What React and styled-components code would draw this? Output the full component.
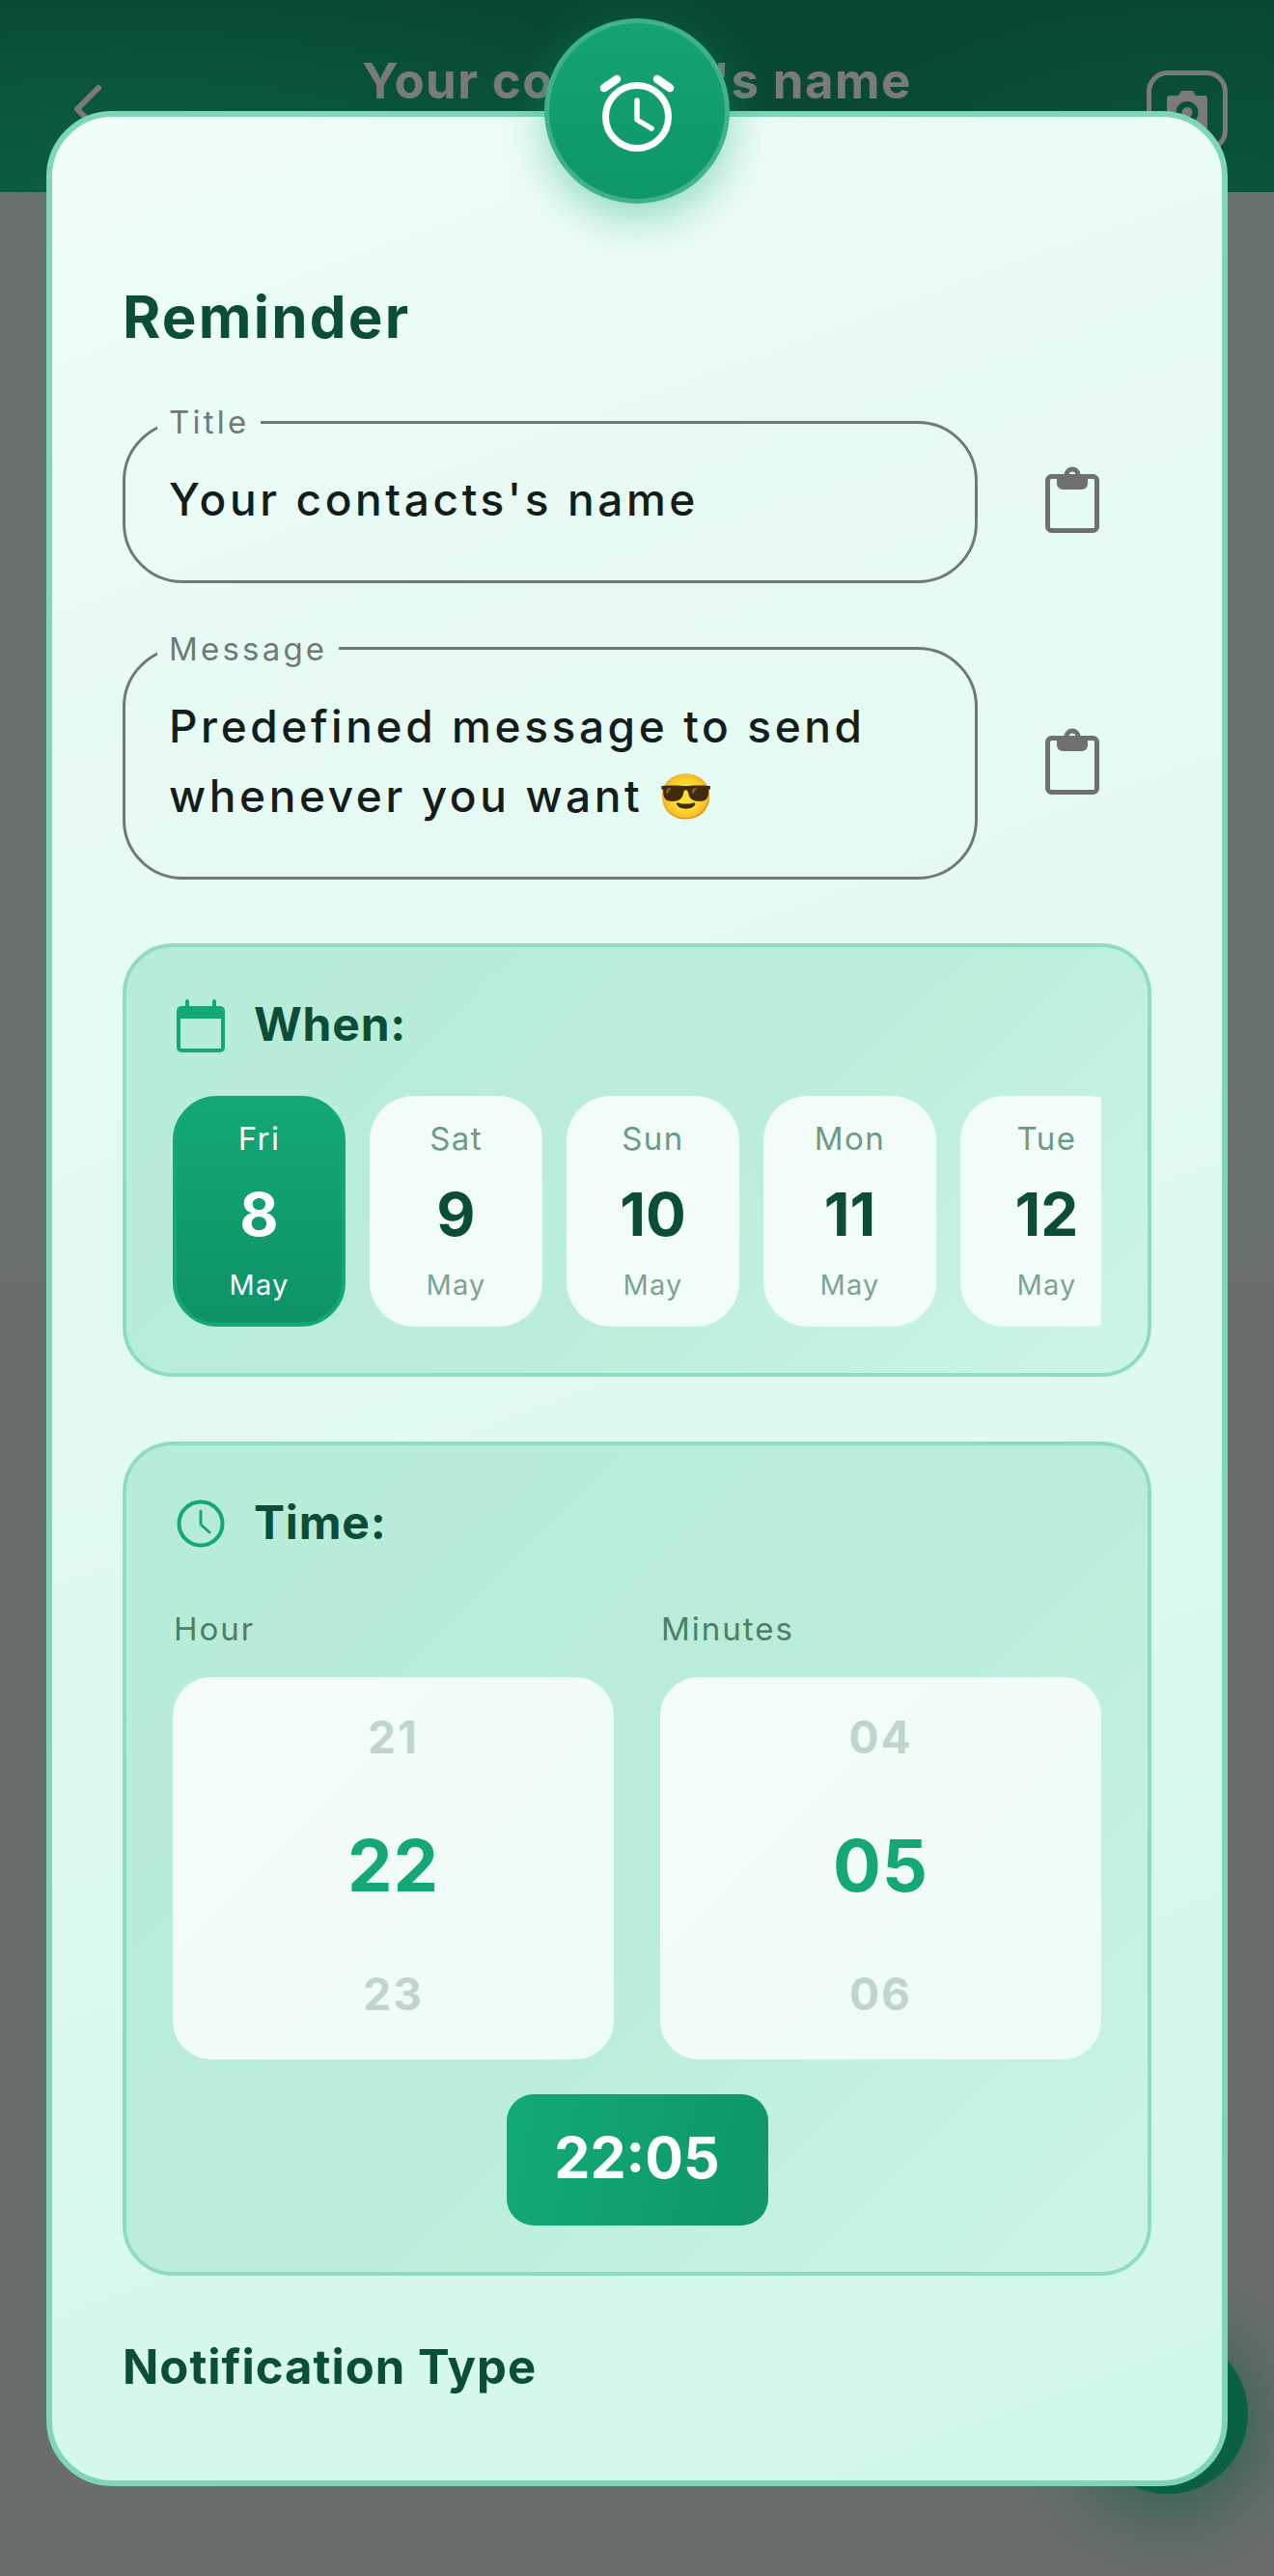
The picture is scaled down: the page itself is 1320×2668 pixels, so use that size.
import React from 'react'
import styled, { createGlobalStyle } from 'styled-components'

const GlobalStyle = createGlobalStyle`
  html, body {
    margin: 0;
    padding: 0;
  }
  body {
    font-family: Inter, "Noto Sans", sans-serif;
  }
`

const Screen = styled.div`
  position: relative;
  width: 1320px;
  height: 2668px;
  overflow: hidden;
  background: linear-gradient(180deg, #d9efe4 0%, #dde6e0 100%);
`

const AppBar = styled.header`
  display: flex;
  align-items: center;
  justify-content: space-between;
  box-sizing: border-box;
  height: 199px;
  padding: 73px 48px 42px 74px;
  background:
    radial-gradient(ellipse 700px 220px at 120px 199px, #17c98e 0%, rgba(23, 201, 142, 0) 100%),
    radial-gradient(ellipse 400px 200px at 1240px 210px, #16b07f 0%, rgba(22, 176, 127, 0) 100%),
    #139a6e;
`

const BarTitle = styled.h1`
  margin: -62px 0 0 18px;
  font-size: 51px;
  line-height: 56px;
  font-weight: 700;
  letter-spacing: 1.4px;
  color: #fff;
`

const BackIcon = styled.svg`
  display: block;
  width: 40px;
  height: 60px;
`

const CameraButton = styled.div`
  display: flex;
  align-items: center;
  justify-content: center;
  box-sizing: border-box;
  width: 84px;
  height: 84px;
  border: 5px solid #fff;
  border-radius: 22px;
`

const Fab = styled.div`
  position: absolute;
  left: 1127px;
  top: 2417px;
  width: 166px;
  height: 166px;
  border-radius: 50%;
  background: #14c88d;
  box-shadow: 0 10px 70px 20px rgba(20, 190, 130, 0.5);
`

const Scrim = styled.div`
  position: absolute;
  inset: 0;
  background: rgba(0, 0, 0, 0.52);
`

const Modal = styled.section`
  position: absolute;
  left: 48px;
  top: 115px;
  box-sizing: border-box;
  width: 1224px;
  height: 2460px;
  padding: 173px 0 0 73px;
  overflow: hidden;
  border: 6px solid #7fd6b6;
  border-radius: 68px;
  background: linear-gradient(160deg, #f0fefa 0%, #e7fbf4 20%, #e2faf1 50%, #cff8e9 100%);
`

const AlarmBadge = styled.div`
  position: absolute;
  left: 564px;
  top: 19px;
  display: flex;
  align-items: center;
  justify-content: center;
  box-sizing: border-box;
  width: 192px;
  height: 192px;
  border: 5px solid #3fb28c;
  border-radius: 50%;
  background: linear-gradient(180deg, #15a374 0%, #0f9769 100%);
  box-shadow: 0 14px 44px rgba(20, 168, 116, 0.42);
`

const Heading = styled.h2`
  margin: 0 0 57px 0;
  font-size: 60px;
  line-height: 68px;
  font-weight: 700;
  letter-spacing: 2.2px;
  color: #0a4d38;
`

const FieldRow = styled.div`
  display: flex;
  align-items: center;
  margin-bottom: ${p => p.$gap}px;
`

const Field = styled.fieldset`
  box-sizing: border-box;
  width: 886px;
  margin: 0;
  padding: 26px 30px 47px 45px;
  border: 3px solid #6f7a75;
  border-radius: 62px;
  min-inline-size: 0;
`

const FieldLabel = styled.legend`
  margin-left: -12px;
  padding: 0 12px;
  font-size: 33px;
  line-height: 36px;
  letter-spacing: 3.2px;
  color: #6f7a75;
`

const FieldValue = styled.div`
  font-size: 46px;
  line-height: 72.5px;
  letter-spacing: 3.6px;
  font-weight: 500;
  color: #151d1a;
`

const ClipIcon = styled.svg`
  display: block;
  flex: none;
  width: 58px;
  height: 70px;
  margin: 12px 0 0 69px;
`

const Card = styled.section`
  box-sizing: border-box;
  width: 1066px;
  margin-bottom: ${p => p.$gap}px;
  padding: 50px 48px 48px;
  border: 4px solid #8fdcc0;
  border-radius: 52px;
  background: linear-gradient(135deg, #b7ecd9 0%, #baeeda 55%, #cdf5e6 100%);
`

const CardHeader = styled.div`
  display: flex;
  align-items: center;
  gap: 29px;
  height: 60px;
  padding-left: 3px;
`

const CardTitle = styled.h3`
  margin: 0;
  font-size: 48px;
  line-height: 60px;
  font-weight: 700;
  letter-spacing: 0.8px;
  color: #0a4d38;
`

const HeaderIcon = styled.svg`
  display: block;
  flex: none;
  width: 52px;
  height: 60px;
`

const DayRow = styled.div`
  display: flex;
  gap: 25px;
  margin-top: 44px;
  overflow: hidden;
`

const Day = styled.div`
  flex: none;
  display: flex;
  flex-direction: column;
  align-items: center;
  box-sizing: border-box;
  width: 179px;
  height: 239px;
  padding-top: 24px;
  border-radius: 46px;
  border: ${p => (p.$active ? '4px solid #14a874' : '0')};
  background: ${p => (p.$active ? 'linear-gradient(180deg, #13a876 0%, #0e9268 100%)' : '#f2fcf8')};
`

const DayName = styled.div`
  margin-top: ${p => (p.$active ? '-4px' : '0')};
  font-size: 33px;
  line-height: 40px;
  letter-spacing: 1.4px;
  color: ${p => (p.$active ? '#fff' : '#6b9a88')};
`

const DayNumber = styled.div`
  margin-top: 24px;
  font-size: 62px;
  line-height: 70px;
  font-weight: 700;
  color: ${p => (p.$active ? '#fff' : '#0a4d38')};
`

const DayMonth = styled.div`
  margin-top: 19px;
  font-size: 29px;
  line-height: 38px;
  letter-spacing: 1.2px;
  color: ${p => (p.$active ? '#fff' : '#7ba595')};
`

const WheelGrid = styled.div`
  display: grid;
  grid-template-columns: 457px 457px;
  column-gap: 48px;
  margin-top: 60px;
`

const WheelLabel = styled.div`
  padding-left: 1px;
  margin-bottom: 30px;
  font-size: 33px;
  line-height: 40px;
  letter-spacing: 2px;
  color: #4a7f6c;
`

const Wheel = styled.div`
  display: flex;
  flex-direction: column;
  align-items: center;
  justify-content: center;
  box-sizing: border-box;
  height: 396px;
  padding-bottom: 4px;
  border-radius: 40px;
  background: linear-gradient(135deg, #f5fcf9 0%, #eefcf6 100%);
`

const WheelItem = styled.div`
  height: 133px;
  line-height: 133px;
  font-size: ${p => (p.$current ? '74px' : '46px')};
  font-weight: 700;
  letter-spacing: ${p => (p.$current ? '1px' : '2px')};
  color: ${p => (p.$current ? '#14a874' : '#bfd6cd')};
`

const TimeChip = styled.div`
  width: 271px;
  height: 136px;
  margin: 36px auto 0;
  border-radius: 28px;
  background: linear-gradient(100deg, #12aa77 0%, #0f9669 100%);
  text-align: center;
  font-size: 59px;
  line-height: 132px;
  font-weight: 700;
  color: #fff;
`

const SectionTitle = styled.h3`
  margin: -6px 0 0 0;
  font-size: 49px;
  line-height: 50px;
  font-weight: 700;
  letter-spacing: 1px;
  color: #0a4d38;
`

const Camera = () => (
  <svg width="44" height="48" viewBox="0 0 44 48">
    <path fill="#fff" fillRule="evenodd" d="M4 8h9l3-5h12l3 5h9a3 3 0 0 1 3 3v30a3 3 0 0 1-3 3H4a3 3 0 0 1-3-3V11a3 3 0 0 1 3-3zm18 6a11.500 11.500 0 1 0 0 23 11.500 11.500 0 0 0 0-23zm0 6a5.500 5.500 0 1 1 0 11 5.500 5.500 0 0 1 0-11z" />
  </svg>
)

const Alarm = () => (
  <svg width="100" height="100" viewBox="0 0 100 100" fill="none" stroke="#fff" strokeLinecap="round">
    <circle cx="50" cy="56" r="32.500" strokeWidth="7" />
    <path d="M50 39v20l15 9" strokeWidth="5.500" strokeLinejoin="round" />
    <path d="M16 26l13-9M71 17l13 9" strokeWidth="8.500" />
  </svg>
)

const Clipboard = () => (
  <ClipIcon viewBox="0 0 58 70">
    <rect x="3.500" y="11.500" width="51" height="56" rx="4" fill="none" stroke="#707070" strokeWidth="5" />
    <path fill="#707070" fillRule="evenodd" d="M13 10h7.500a8.500 8.500 0 0 1 17 0H45v9a6 6 0 0 1-6 6H19a6 6 0 0 1-6-6zM29 6.500a3.500 3.500 0 1 0 0 7 3.500 3.500 0 0 0 0-7z" />
  </ClipIcon>
)

const Calendar = () => (
  <HeaderIcon viewBox="0 0 52 60">
    <rect x="3" y="13" width="46" height="44" rx="3" fill="none" stroke="#14a874" strokeWidth="4" />
    <path d="M3 13h46v11H3z" fill="#14a874" />
    <path d="M12 6v8M40 6v8" stroke="#14a874" strokeWidth="4" strokeLinecap="round" />
  </HeaderIcon>
)

const Clock = () => (
  <HeaderIcon viewBox="0 0 52 60" fill="none" stroke="#14a874">
    <circle cx="26" cy="31" r="22.500" strokeWidth="4" />
    <path d="M26 18v14l9 8" strokeWidth="3" strokeLinecap="round" strokeLinejoin="round" />
  </HeaderIcon>
)

const days = [
  { name: 'Fri', num: 8, active: true },
  { name: 'Sat', num: 9 },
  { name: 'Sun', num: 10 },
  { name: 'Mon', num: 11 },
  { name: 'Tue', num: 12 }
]

const wheels = [
  { label: 'Hour', values: ['21', '22', '23'] },
  { label: 'Minutes', values: ['04', '05', '06'] }
]

const App = () => (
  <Screen>
    <GlobalStyle />
    <AppBar>
      <BackIcon viewBox="0 0 40 60" fill="none" stroke="#fff" strokeWidth="6" strokeLinecap="round" strokeLinejoin="round">
        <path d="M28 6L6 28l22 22" />
      </BackIcon>
      <BarTitle>Your contacts's name</BarTitle>
      <CameraButton><Camera /></CameraButton>
    </AppBar>
    <Fab />
    <Scrim />
    <Modal>
      <Heading>Reminder</Heading>
      <FieldRow $gap={50}>
        <Field>
          <FieldLabel>Title</FieldLabel>
          <FieldValue>Your contacts's name</FieldValue>
        </Field>
        <Clipboard />
      </FieldRow>
      <FieldRow $gap={66}>
        <Field>
          <FieldLabel>Message</FieldLabel>
          <FieldValue>Predefined message to send whenever you want 😎</FieldValue>
        </Field>
        <Clipboard />
      </FieldRow>
      <Card $gap={67}>
        <CardHeader>
          <Calendar />
          <CardTitle>When:</CardTitle>
        </CardHeader>
        <DayRow>
          {days.map(d => (
            <Day key={d.num} $active={d.active}>
              <DayName $active={d.active}>{d.name}</DayName>
              <DayNumber $active={d.active}>{d.num}</DayNumber>
              <DayMonth $active={d.active}>May</DayMonth>
            </Day>
          ))}
        </DayRow>
      </Card>
      <Card $gap={76}>
        <CardHeader>
          <Clock />
          <CardTitle>Time:</CardTitle>
        </CardHeader>
        <WheelGrid>
          {wheels.map(w => (
            <div key={w.label}>
              <WheelLabel>{w.label}</WheelLabel>
              <Wheel>
                {w.values.map((v, i) => (
                  <WheelItem key={v} $current={i === 1}>{v}</WheelItem>
                ))}
              </Wheel>
            </div>
          ))}
        </WheelGrid>
        <TimeChip>22:05</TimeChip>
      </Card>
      <SectionTitle>Notification Type</SectionTitle>
    </Modal>
    <AlarmBadge><Alarm /></AlarmBadge>
  </Screen>
)

export default App
